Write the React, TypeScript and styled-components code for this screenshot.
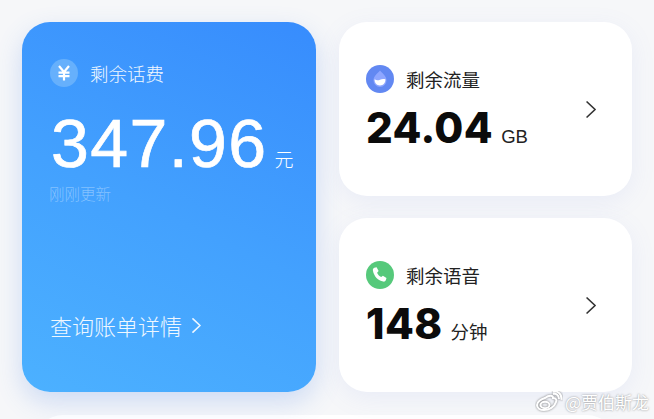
import styled, { createGlobalStyle } from "styled-components";

const GlobalStyle = createGlobalStyle`
  html, body {
    margin: 0;
    padding: 0;
    background: #f6f7f9;
    font-family: "Liberation Sans", "Noto Sans CJK SC", sans-serif;
  }
`;

const CJK = `"Noto Sans CJK SC", sans-serif`;

const Page = styled.div`
  position: relative;
  width: 654px;
  height: 419px;
  overflow: hidden;
  box-sizing: border-box;
  padding: 22px 22px 0;
`;

const Grid = styled.div`
  display: grid;
  grid-template-columns: 294px 293px;
  grid-template-rows: 174px 174px;
  column-gap: 23px;
  row-gap: 22px;
`;

const BalanceCard = styled.section`
  grid-row: 1 / 3;
  display: flex;
  flex-direction: column;
  box-sizing: border-box;
  padding: 37px 0 52px 28px;
  border-radius: 28px;
  color: #fff;
  background: linear-gradient(205deg, #378cfd 0%, #43a1fe 52%, #4cb1ff 100%);
  box-shadow: 0 10px 26px rgba(74, 130, 232, 0.24);
`;

const Header = styled.div`
  display: flex;
  align-items: center;
  gap: 12px;
  height: 28px;
`;

const IconCircle = styled.div<{ $bg: string }>`
  display: flex;
  align-items: center;
  justify-content: center;
  width: 28px;
  height: 28px;
  border-radius: 50%;
  background: ${({ $bg }) => $bg};
`;

const Label = styled.span<{ $light?: boolean }>`
  font-family: ${CJK};
  font-size: 18.5px;
  font-weight: ${({ $light }) => ($light ? 300 : 400)};
  line-height: 28px;
  color: ${({ $light }) => ($light ? "#f0f7ff" : "#222")};
`;

const BalanceRow = styled.div`
  display: flex;
  align-items: baseline;
  margin-top: 19px;
  margin-left: 1px;
  height: 74px;
  line-height: 74px;
`;

const BalanceValue = styled.span`
  font-size: 68px;
  letter-spacing: 1.4px;
  font-weight: 400;
  -webkit-text-stroke: 0.7px #fff;
`;

const BalanceUnit = styled.span`
  font-family: ${CJK};
  font-size: 19px;
  font-weight: 300;
  margin-left: 7px;
`;

const Updated = styled.div`
  margin-top: 2px;
  margin-left: -1px;
  font-family: ${CJK};
  font-size: 15.5px;
  font-weight: 300;
  line-height: 22px;
  color: rgba(255, 255, 255, 0.36);
`;

const BillLink = styled.a`
  display: flex;
  align-items: center;
  gap: 10px;
  margin-top: auto;
  font-family: ${CJK};
  font-size: 22px;
  font-weight: 300;
  line-height: 30px;
  color: #eef7ff;
`;

const UsageCard = styled.section`
  display: flex;
  align-items: center;
  justify-content: space-between;
  box-sizing: border-box;
  padding: 0 36px 0 27px;
  border-radius: 28px;
  background: #fff;
  box-shadow: 0 6px 24px rgba(120, 140, 230, 0.1);
`;

const UsageBody = styled.div`
  display: flex;
  flex-direction: column;
  gap: 10px;
  padding-bottom: 1px;
`;

const UsageRow = styled.div`
  display: flex;
  align-items: baseline;
  gap: 8px;
  height: 50px;
  line-height: 50px;
  color: #0b0b0b;
`;

const UsageValue = styled.span`
  font-family: Inter, "Liberation Sans", sans-serif;
  font-size: 42px;
  font-weight: 800;
  letter-spacing: 0.4px;
`;

const UsageUnit = styled.span<{ $cjk?: boolean }>`
  font-family: ${({ $cjk }) => ($cjk ? CJK : `"Liberation Sans", sans-serif`)};
  font-size: 18.5px;
  font-weight: 400;
  color: #222;
`;

const BottomCard = styled.div`
  margin: 23px 0 0 13px;
  width: 580px;
  height: 60px;
  border-radius: 28px 28px 0 0;
  background: #fff;
`;

const Watermark = styled.div`
  position: absolute;
  right: 5px;
  bottom: 6px;
  display: flex;
  align-items: center;
  gap: 2px;
  font-family: ${CJK};
  font-size: 17px;
  line-height: 20px;
  color: #fff;
  text-shadow: 0 0 2px rgba(90, 90, 90, 0.75);
`;

const Chevron = ({ size, color, weight }: { size: number; color: string; weight: number }) => (
  <svg width={size * 0.6} height={size} viewBox="0 0 10 17" fill="none">
    <path d="M1 1l8 7.5L1 16" stroke={color} strokeWidth={weight} strokeLinecap="round" strokeLinejoin="round" />
  </svg>
);

const YenIcon = () => (
  <svg width="14" height="16" viewBox="0 0 14 16" fill="none" stroke="#fff" strokeWidth="2.2">
    <path d="M2 1l5 6 5-6M1.500 7.600h11M1.500 11.200h11M7 7v8.500" />
  </svg>
);

const DropIcon = () => (
  <svg width="28" height="28" viewBox="0 0 28 28">
    <path d="M14 5.500c2 2.600 6.500 5.400 6.500 10a6.500 6.500 0 0 1-13 0c0-4.600 4.500-7.400 6.500-10z" fill="#8ea6ff" />
    <path d="M8.600 14.300c1.800 1.300 3.600 1.300 5.400.4 1.800-.9 3.600-.9 5.400-.4.300 3.600-2.200 6.200-5.400 6.200s-5.700-2.600-5.400-6.200z" fill="#fff" />
  </svg>
);

const PhoneIcon = () => (
  <svg width="18" height="18" viewBox="0 0 18 18">
    <path
      d="M3.300 1.800l2.300-.6 2 3.900-1.500 1.600c.7 1.900 2.100 3.400 4.100 4.400l1.700-1.400 3.600 2.300-.7 2.300c-.4 1-1.400 1.500-2.500 1.300C7 14.600 3 10.500 1.900 4.500c-.2-1.200.4-2.300 1.400-2.700z"
      fill="#fff"
    />
  </svg>
);

const WeiboIcon = () => (
  <svg width="28" height="22" viewBox="0 0 28 22" fill="none" stroke="#fff" strokeWidth="2">
    <g style={{ filter: "drop-shadow(0 0 1px rgba(90,90,90,.8))" }}>
      <path d="M10 7c4-3 8-3 8 0 3 0 4 2 3 4-1.500 5-7 8-12 8-4 0-7-2-7-5 0-3 4-6 8-7z" />
      <ellipse cx="10" cy="14" rx="4.500" ry="3.200" />
      <path d="M18 3c3-1 6 1 6 5M18 .8c5-1 9 2 8.500 8" />
    </g>
  </svg>
);

const App = () => {
  return (
    <Page>
      <GlobalStyle />
      <Grid>
        <BalanceCard>
          <Header>
            <IconCircle $bg="#66b0fc">
              <YenIcon />
            </IconCircle>
            <Label $light>剩余话费</Label>
          </Header>
          <BalanceRow>
            <BalanceValue>347.96</BalanceValue>
            <BalanceUnit>元</BalanceUnit>
          </BalanceRow>
          <Updated>刚刚更新</Updated>
          <BillLink>
            查询账单详情
            <Chevron size={15} color="#eef7ff" weight={1.8} />
          </BillLink>
        </BalanceCard>

        <UsageCard>
          <UsageBody>
            <Header>
              <IconCircle $bg="#6288f2">
                <DropIcon />
              </IconCircle>
              <Label>剩余流量</Label>
            </Header>
            <UsageRow>
              <UsageValue>24.04</UsageValue>
              <UsageUnit>GB</UsageUnit>
            </UsageRow>
          </UsageBody>
          <Chevron size={17} color="#333" weight={1.7} />
        </UsageCard>

        <UsageCard>
          <UsageBody>
            <Header>
              <IconCircle $bg="#56c97b">
                <PhoneIcon />
              </IconCircle>
              <Label>剩余语音</Label>
            </Header>
            <UsageRow>
              <UsageValue>148</UsageValue>
              <UsageUnit $cjk>分钟</UsageUnit>
            </UsageRow>
          </UsageBody>
          <Chevron size={17} color="#333" weight={1.7} />
        </UsageCard>
      </Grid>
      <BottomCard />
      <Watermark>
        <WeiboIcon />
        @贾伯斯龙
      </Watermark>
    </Page>
  );
};

export default App;
